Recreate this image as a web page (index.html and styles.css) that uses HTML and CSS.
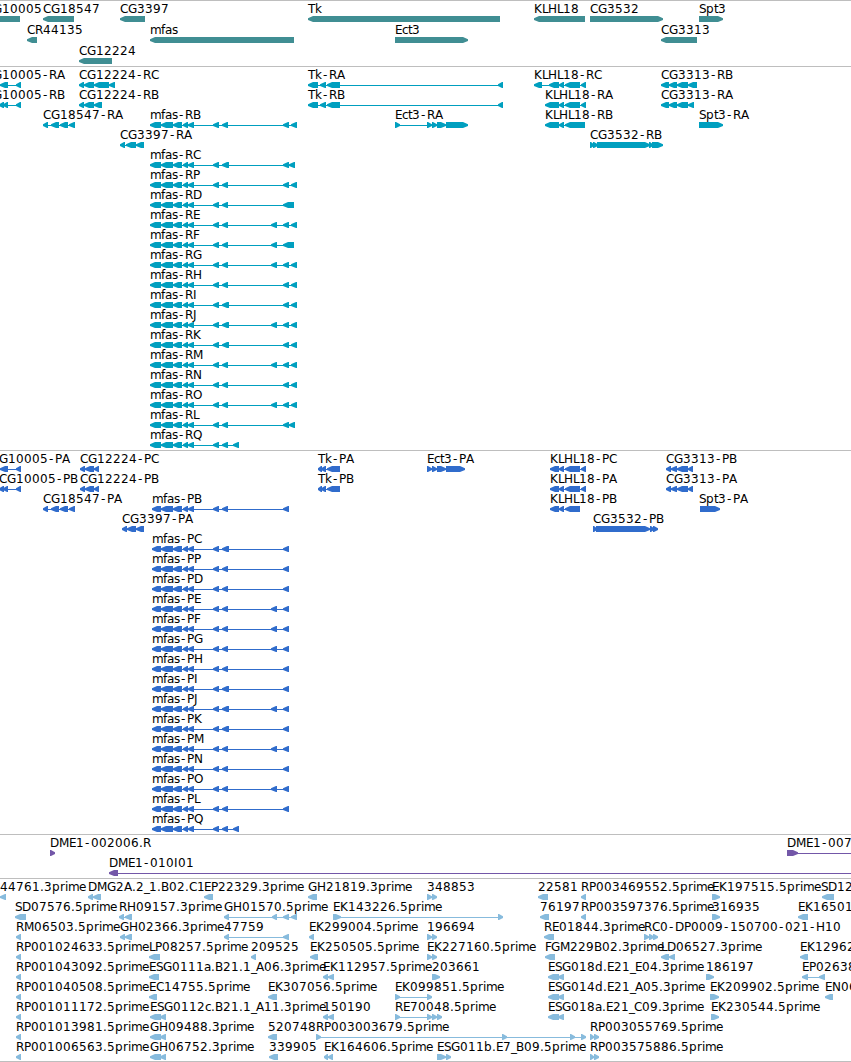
FILE: index.html
```
<!DOCTYPE html>
<html lang="en">
<head>
  <meta charset="UTF-8">
  <meta name="viewport" content="width=device-width, initial-scale=1.0">
  <title>Genome Browser</title>
  <link rel="stylesheet" href="styles.css">
</head>
<body>
  <main class="browser">
    <section class="track track-genes" id="genes"></section>
    <section class="track track-transcripts" id="transcripts"></section>
    <section class="track track-proteins" id="proteins"></section>
    <section class="track track-clones" id="clones"></section>
    <section class="track track-ests" id="ests"></section>
  </main>

  <script src="tracks.js"></script>
</body>
</html>
```

FILE: styles.css
```
/* General Styles */
body {
  margin: 0;
  background: #fff;
  color: #000;
  font-family: "DejaVu Sans", sans-serif;
  font-size: 12px;
}

.browser {
  display: flex;
  flex-direction: column;
  height: 1062px;
  overflow: hidden;
}

/* Tracks */
.track {
  flex: none;
  box-sizing: border-box;
  border-top: 1px solid #bebebe;
  overflow: hidden;
}

.track svg {
  display: block;
  width: 100%;
  height: 100%;
}

.track text {
  fill: #000;
}

.track-genes {
  height: 66px;
  color: #408e93;
}

.track-transcripts {
  height: 384px;
  color: #009fbf;
}

.track-proteins {
  height: 384px;
  color: #306ccc;
}

.track-clones {
  height: 44px;
  color: #7357a8;
}

.track-ests {
  height: 184px;
  border-bottom: 1px solid #bebebe;
  color: #87bbdd;
}

/* Features */
.exon,
.intron {
  fill: currentColor;
}
```

FILE: tracks.js
```
const SVG_NS = 'http://www.w3.org/2000/svg';

// Label advance widths in px, digits and anything missing are 8
const ADVANCE = {
  A: 8, B: 8, C: 8, D: 9, E: 7, F: 6, G: 9, H: 9, I: 4, J: 4, K: 8, L: 6, M: 10,
  N: 9, O: 10, P: 7, Q: 10, R: 8, S: 7, T: 7,
  a: 7, c: 6, e: 7, f: 4, i: 3, k: 7, m: 11, p: 8, r: 5, s: 6, t: 4,
  '.': 4, '-': 7, '_': 5
};

// Each feature: [row, label, label x, direction, 'start:end start:end ...']
const genes = [
  [0, 'CG10005', -15, '<', '-40:20'],
  [0, 'CG18547', 43, '<', '43:74'],
  [0, 'CG3397', 120, '<', '120:145'],
  [0, 'Tk', 308, '<', '308:500'],
  [0, 'KLHL18', 534, '<', '534:585'],
  [0, 'CG3532', 590, '>', '590:663'],
  [0, 'Spt3', 699, '>', '699:723'],
  [1, 'CR44135', 27, '<', '27:37'],
  [1, 'mfas', 150, '<', '150:294'],
  [1, 'Ect3', 395, '>', '395:468'],
  [1, 'CG3313', 661, '<', '661:697'],
  [2, 'CG12224', 79, '<', '79:112']
];

const transcripts = [
  [0, 'CG10005-RA', -15, '<', '-20:-1 0:8 16:21'],
  [0, 'CG12224-RC', 79, '<', '79:84 84:94 94:109 109:115'],
  [0, 'Tk-RA', 308, '<', '308:318 320:326 327:340 498:503'],
  [0, 'KLHL18-RC', 534, '<', '534:542 549:559 559:564 565:580 581:586'],
  [0, 'CG3313-RB', 661, '<', '661:669 669:677 677:688 688:697'],
  [1, 'CG10005-RB', -15, '<', '-20:-1 -1:4 3:8 16:21'],
  [1, 'CG12224-RB', 79, '<', '79:84 84:94 94:102'],
  [1, 'Tk-RB', 308, '<', '308:318 320:326 327:340 498:503'],
  [1, 'KLHL18-RA', 545, '<', '545:559 559:564 565:580 581:586'],
  [1, 'CG3313-RA', 661, '<', '661:669 669:677 677:688 688:694'],
  [2, 'CG18547-RA', 43, '<', '43:48 51:59 60:68 69:75'],
  [2, 'Ect3-RA', 395, '>', '395:400 427:432 432:437 437:446 446:468'],
  [2, 'KLHL18-RB', 545, '<', '545:559 559:564 565:585'],
  [2, 'Spt3-RA', 699, '>', '699:723'],
  [3, 'CG3397-RA', 120, '<', '120:125 126:136 136:144'],
  [3, 'CG3532-RB', 590, '>', '590:594 593:598 597:650 649:653 652:663']
];

const proteins = [
  [0, 'CG10005-PA', -9, '<', '-20:-1 0:8 16:21'],
  [0, 'CG12224-PC', 80, '<', '80:85 85:94 94:99'],
  [0, 'Tk-PA', 318, '<', '318:322 321:326 327:340'],
  [0, 'Ect3-PA', 427, '>', '427:432 432:437 437:446 446:465'],
  [0, 'KLHL18-PC', 550, '<', '550:559 559:564 565:580 581:586'],
  [0, 'CG3313-PB', 666, '<', '666:671 671:677 677:688 688:693'],
  [1, 'CG10005-PB', -1, '<', '-1:4 3:8 16:21'],
  [1, 'CG12224-PB', 80, '<', '80:85 85:94 94:99'],
  [1, 'Tk-PB', 318, '<', '318:322 321:326 327:340'],
  [1, 'KLHL18-PA', 550, '<', '550:559 559:564 565:580 581:586'],
  [1, 'CG3313-PA', 666, '<', '666:671 671:677 677:688 688:693'],
  [2, 'CG18547-PA', 43, '<', '43:48 51:59 60:68 69:75'],
  [2, 'KLHL18-PB', 550, '<', '550:559 559:564 565:580'],
  [2, 'Spt3-PA', 699, '>', '700:720'],
  [3, 'CG3397-PA', 122, '<', '122:127 127:136 136:144'],
  [3, 'CG3532-PB', 593, '>', '593:597 596:650 650:654 653:658']
];

// mfas isoforms: [row, suffix, exons after the shared ones, same for the protein]
const mfas = [
  [2, 'B', '222:228 283:289 291:297', '222:228 283:289'],
  [4, 'C', '222:229 283:289 289:295', '222:229 283:289'],
  [5, 'P', '222:228 283:289 291:297', '222:228 283:289'],
  [6, 'D', '222:228 283:294', '222:228 283:289'],
  [7, 'E', '222:228 271:277 283:289 291:297', '222:228 271:277 283:289'],
  [8, 'F', '222:228 271:277 283:294', '222:228 271:277 283:289'],
  [9, 'G', '222:228 271:277 283:289 291:297', '222:228 271:277 283:289'],
  [10, 'H', '222:228 283:289 291:297', '222:228 283:289'],
  [11, 'I', '222:229 283:289 291:297', '222:229 283:289'],
  [12, 'J', '222:229 271:277 283:289 291:297', '222:229 271:277 283:289'],
  [13, 'K', '222:229 283:289 291:297', '222:229 283:289'],
  [14, 'M', '222:228 271:277 283:289 291:297', '222:228 271:277 283:289'],
  [15, 'N', '222:228 283:289 291:297', '222:228 283:289'],
  [16, 'O', '222:228 271:277 283:289 291:297', '222:228 271:277 283:289'],
  [17, 'L', '222:228 283:289 289:295', '222:228 283:289'],
  [18, 'Q', '222:228 233:239', '222:228 233:239']
];

mfas.forEach(([row, id, rna, protein]) => {
  const shared = '161:173 173:182 183:188 188:194 213:219 ';
  transcripts.push([row, 'mfas-R' + id, 150, '<', '150:161 ' + shared + rna]);
  proteins.push([row, 'mfas-P' + id, 152, '<', '152:161 ' + shared + protein]);
});

const clones = [
  [0, 'DME1-002006.R', 50, '>', '50:55'],
  [0, 'DME1-007', 787, '>', '787:798 900:910'],
  [1, 'DME1-010I01', 109, '<', '109:118 900:910']
];

const ests = [
  [0, '44761.3prime', 0, '<', '0:6'],
  [0, 'DMG2A.2_1.B02.C1', 88, '<', '88:93 93:101'],
  [0, 'EP22329.3prime', 204, '<', '204:213'],
  [0, 'GH21819.3prime', 308, '<', '308:317'],
  [0, '348853', 427, '>', '427:432 432:437'],
  [0, '22581', 538, '<', '538:548'],
  [0, 'RP003469552.5prime', 581, '<', '581:586'],
  [0, 'EK197515.5prime', 712, '>', '712:720'],
  [0, 'SD12', 821, '<', '822:834'],
  [1, 'SD07576.5prime', 15, '<', '15:26'],
  [1, 'RH09157.3prime', 119, '<', '119:124 125:132'],
  [1, 'GH01570.5prime', 224, '<', '224:229 272:277 283:289 291:297'],
  [1, 'EK143226.5prime', 333, '>', '333:341 498:503'],
  [1, '76197', 540, '<', '540:549'],
  [1, 'RP003597376.5prime', 581, '<', '581:586'],
  [1, '316935', 712, '>', '712:720'],
  [1, 'EK16501', 798, '<', '798:808'],
  [2, 'RM06503.5prime', 16, '<', '16:21'],
  [2, 'GH02366.3prime', 120, '<', '120:125 125:132'],
  [2, '47759', 224, '<', '224:229 283:289'],
  [2, 'EK299004.5prime', 309, '<', '309:314'],
  [2, '196694', 427, '>', '427:432 432:437'],
  [2, 'RE01844.3prime', 544, '<', '544:554'],
  [2, 'RC0-DP0009-150700-021-H10', 644, '>', '644:649 649:654 653:658'],
  [3, 'RP001024633.5prime', 16, '<', '16:21'],
  [3, 'LP08257.5prime', 149, '<', '149:160'],
  [3, '209525', 251, '<', '251:256'],
  [3, 'EK250505.5prime', 310, '<', '310:318'],
  [3, 'EK227160.5prime', 427, '>', '427:432 432:437'],
  [3, 'FGM229B02.3prime', 545, '<', '545:555'],
  [3, 'LD06527.3prime', 661, '<', '661:669 669:675'],
  [3, 'EK12962', 800, '<', '800:808'],
  [4, 'RP001043092.5prime', 16, '<', '16:21'],
  [4, 'ESG0111a.B21.1_A06.3prime', 149, '<', '149:159'],
  [4, 'EK112957.5prime', 323, '<', '323:328 328:334'],
  [4, '203661', 432, '>', '432:440'],
  [4, 'ESG018d.E21_E04.3prime', 548, '<', '548:559 558:564'],
  [4, '186197', 706, '>', '706:714'],
  [4, 'EP02638', 802, '<', '802:808 819:825'],
  [5, 'RP001040508.5prime', 16, '<', '16:21'],
  [5, 'EC14755.5prime', 149, '<', '149:157'],
  [5, 'EK307056.5prime', 268, '<', '268:277'],
  [5, 'EK099851.5prime', 395, '>', '395:400 427:432'],
  [5, 'ESG014d.E21_A05.3prime', 548, '<', '548:559 558:564'],
  [5, 'EK209902.5prime', 710, '>', '710:719'],
  [5, 'EN06', 825, '<', '825:833'],
  [6, 'RP001011172.5prime', 16, '<', '16:21'],
  [6, 'ESG0112c.B21.1_A11.3prime', 150, '<', '150:161 160:166'],
  [6, '150190', 323, '<', '323:328 328:334'],
  [6, 'RE70048.5prime', 395, '>', '395:400 427:432 432:437 437:442'],
  [6, 'ESG018a.E21_C09.3prime', 548, '<', '548:559 558:564'],
  [6, 'EK230544.5prime', 711, '>', '711:719'],
  [7, 'RP001013981.5prime', 16, '<', '16:21'],
  [7, 'GH09488.3prime', 150, '<', '150:161 160:166'],
  [7, '520748', 268, '<', '268:277'],
  [7, 'RP003003679.5prime', 316, '>', '316:321 502:507 570:575 581:586'],
  [7, 'RP003055769.5prime', 590, '>', '590:594 594:599'],
  [8, 'RP001006563.5prime', 16, '<', '16:21'],
  [8, 'GH06752.3prime', 150, '<', '150:161 160:166'],
  [8, '339905', 269, '<', '269:278'],
  [8, 'EK164606.5prime', 324, '<', '324:328 328:333'],
  [8, 'ESG011b.E7_B09.5prime', 437, '>', '437:446 446:451'],
  [8, 'RP003575886.5prime', 590, '>', '590:594 594:599']
];

function createSvg(name, attrs, parent) {
  const el = document.createElementNS(SVG_NS, name);
  Object.keys(attrs).forEach((key) => el.setAttribute(key, attrs[key]));
  parent.appendChild(el);
  return el;
}

// Arrow-shaped exon with a blunt tip, the head is at most 5px long
function exonPath(start, end, dir, top) {
  const head = Math.min(5, end - start - 1);
  const bottom = top + 6;
  const tipTop = top + 2.2;
  const tipBottom = top + 4;
  if (dir === '<') {
    const neck = start + head;
    return `M${start} ${tipTop}L${neck} ${top}H${end}V${bottom}H${neck}L${start} ${tipBottom}Z`;
  }
  const neck = end - head;
  return `M${end} ${tipTop}L${neck} ${top}H${start}V${bottom}H${neck}L${end} ${tipBottom}Z`;
}

function drawLabel(svg, label, x, y) {
  const xs = [];
  let pos = x;
  for (const ch of label) {
    // hyphen is centred in its slot
    xs.push(ch === '-' ? pos + 1 : pos);
    pos += ADVANCE[ch] || 8;
  }
  createSvg('text', { x: xs.join(' '), y: y }, svg).textContent = label;
}

function drawTrack(id, features, rowHeight) {
  const svg = createSvg('svg', {}, document.getElementById(id));
  features.forEach(([row, label, x, dir, ranges]) => {
    const y = row * rowHeight;
    const exons = ranges.split(' ').map((range) => range.split(':').map(Number));
    const start = exons[0][0];
    const end = exons[exons.length - 1][1];

    if (exons.length > 1) {
      createSvg('rect', { class: 'intron', x: start, y: y + 18, width: end - start, height: 1 }, svg);
    }
    exons.forEach(([from, to]) => {
      createSvg('path', { class: 'exon', d: exonPath(from, to, dir, y + 15) }, svg);
    });
    drawLabel(svg, label, x, y + 12);
  });
}

drawTrack('genes', genes, 21);
drawTrack('transcripts', transcripts, 20);
drawTrack('proteins', proteins, 20);
drawTrack('clones', clones, 20);
drawTrack('ests', ests, 20);
```
